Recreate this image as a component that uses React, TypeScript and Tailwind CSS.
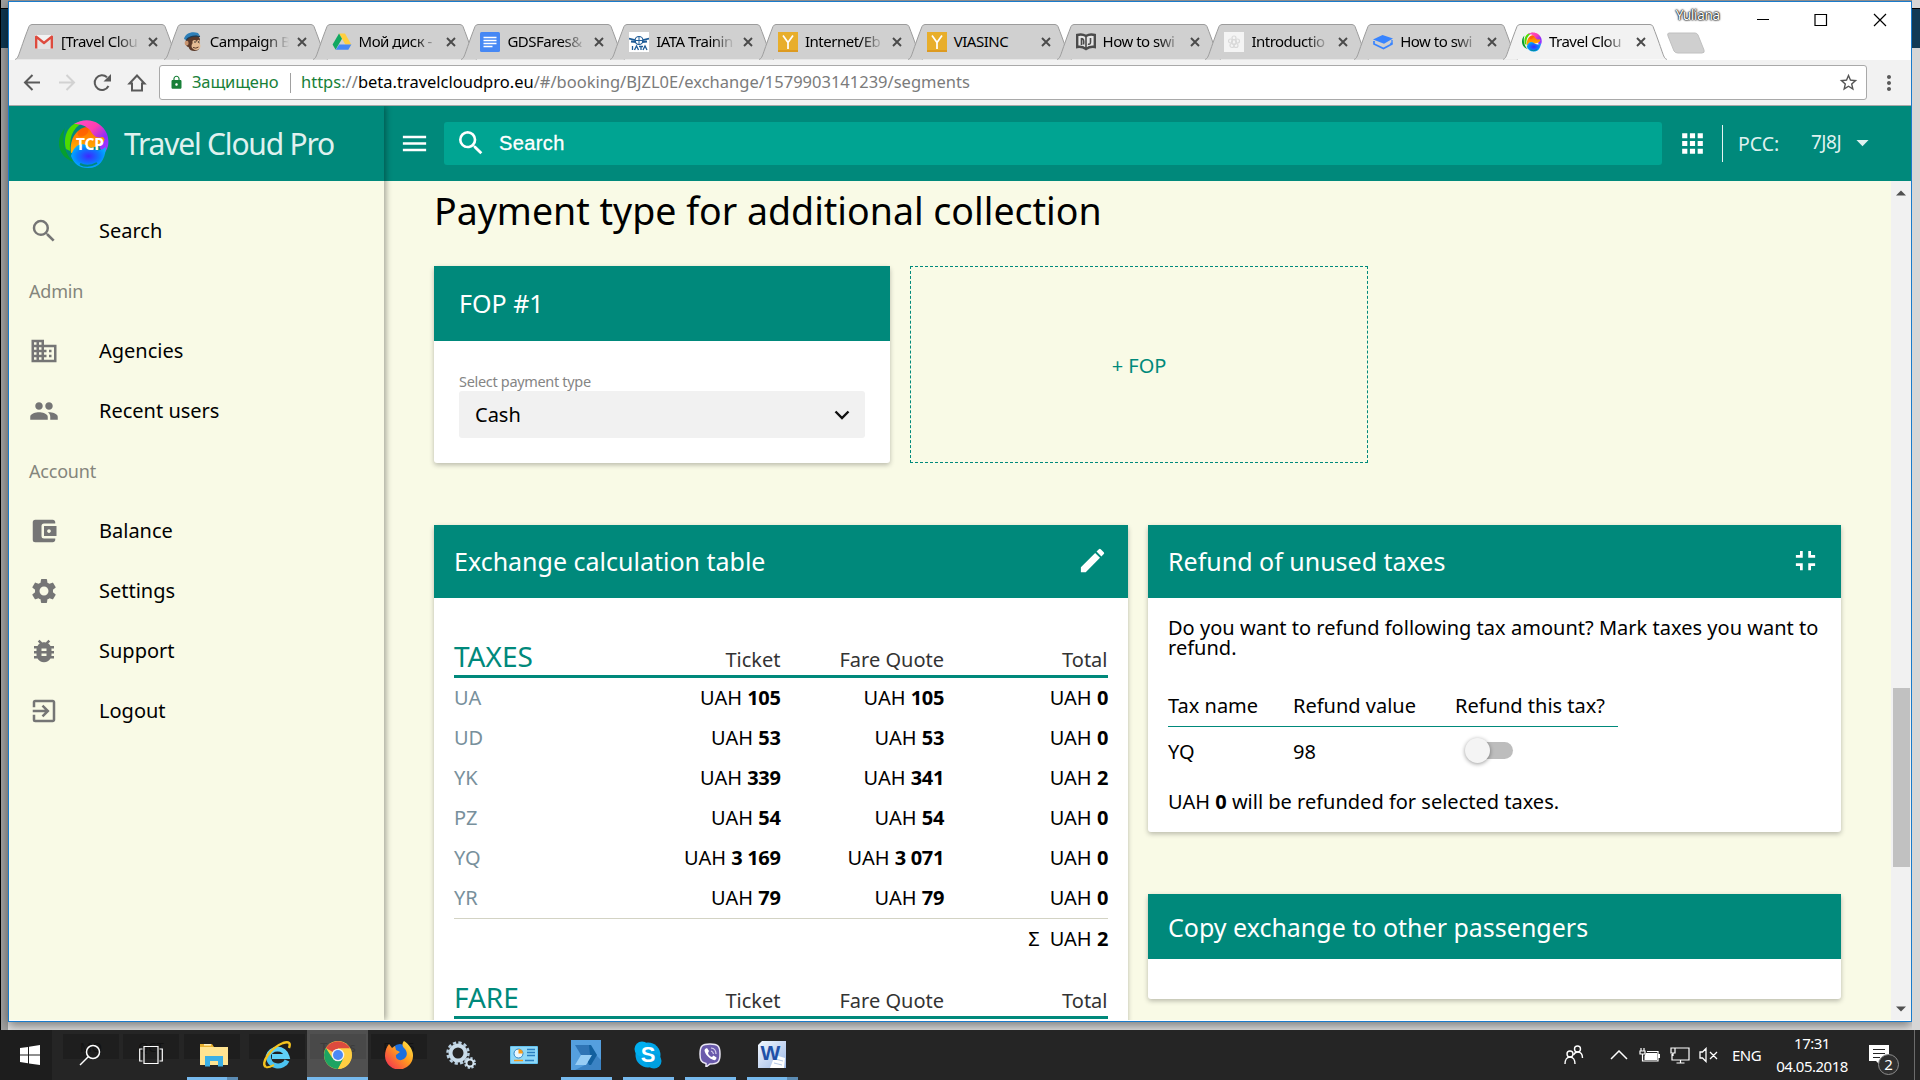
import React from "react";
import {
  MdSearch, MdDomain, MdPeople, MdAccountBalanceWallet, MdSettings, MdBugReport, MdExitToApp,
  MdMenu, MdApps, MdArrowDropDown, MdEdit, MdFullscreenExit, MdLock, MdStarBorder, MdMoreVert,
} from "react-icons/md";

/* ---------- favicons ---------- */
const Gmail = () => (
  <svg viewBox="0 0 20 20" className="size-5 shrink-0">
    <path d="M1 3h18v13.500H1z" fill="#f2f2f2" />
    <path d="M4 16.500V8l6 4.600L16 8v8.500z" fill="#e3e3e3" />
    <path d="M2.200 16.500V4.600L10 11l7.800-6.400V16.500" fill="none" stroke="#dd4b3e" strokeWidth="2.400" strokeLinejoin="round" />
  </svg>
);
const Chimp = () => (
  <svg viewBox="0 0 20 20" className="size-5 shrink-0">
    <path d="M4 7c0-3 3-5 6-5s7 2 7 6l-.5 5c.8 3-1 6-5 6-3 0-5-1-6-4-3 0-4-6-1.500-8z" fill="#5b3a29" />
    <ellipse cx="13" cy="14" rx="4.500" ry="4" fill="#e5bd95" />
    <ellipse cx="11.500" cy="10" rx="2.200" ry="2" fill="#e5bd95" />
    <ellipse cx="15.500" cy="9.800" rx="1.400" ry="2" fill="#e5bd95" />
    <circle cx="12" cy="10" r=".8" fill="#222" /><circle cx="15.600" cy="10" r=".7" fill="#222" />
    <ellipse cx="3.600" cy="11" rx="2" ry="2.500" fill="#c99570" />
    <path d="M10 15.500q3 1.500 5.500-.5" stroke="#5b3a29" fill="none" />
    <path d="M1 7C2 2 8-1 15 1l2 3c-6-.5-11 0-14 4z" fill="#2d7fb8" />
    <path d="M3 8.500C6 4 11 3.500 17 4.500" stroke="#1d3c55" strokeWidth="1.200" fill="none" />
  </svg>
);
const Drive = () => (
  <svg viewBox="0 0 20 20" className="size-5 shrink-0">
    <path d="M7 1.500h6l6.300 11h-6z" fill="#ffcf3f" />
    <path d="M7 1.500L.6 12.500l3 5.300 6.400-11z" fill="#11a861" />
    <path d="M7.200 12.500h12.200l-3.100 5.300H3.800z" fill="#4688f4" />
  </svg>
);
const Doc = () => (
  <svg viewBox="0 0 20 20" className="size-5 shrink-0">
    <rect width="20" height="20" rx="1.500" fill="#4688f4" />
    <path d="M3.500 5.500h13M3.500 8.500h13M3.500 11.500h13M3.500 14.500h9" stroke="#fff" strokeWidth="1.400" />
  </svg>
);
const Iata = () => (
  <svg viewBox="0 0 20 20" className="size-5 shrink-0">
    <rect width="20" height="20" fill="#fff" />
    <circle cx="10" cy="8.500" r="4" fill="none" stroke="#1d5b96" strokeWidth="1.200" />
    <path d="M0 6.500l6 1.500M20 6.500L14 8M2 9.500l5 .5M18 9.500l-5 .5" stroke="#1d5b96" strokeWidth="1.800" />
    <path d="M10 4.500v8M6 8.500h8" stroke="#1d5b96" strokeWidth="1" />
    <path d="M3.500 14v4M5.500 18l2-4 2 4M10 14.500h4M12 14.500V18M14 18l2-4 2 4" stroke="#1d5b96" strokeWidth="1.300" fill="none" />
  </svg>
);
const Yellow = () => (
  <svg viewBox="0 0 20 20" className="size-5 shrink-0">
    <rect width="20" height="20" fill="#e8ae2b" />
    <rect y="18" width="20" height="2" fill="#dd9a20" />
    <path d="M5 3.500l5 7 5-7M10 10.500v6.500" fill="none" stroke="#fff" strokeWidth="1.700" />
  </svg>
);
const Book = () => (
  <svg viewBox="0 0 20 20" className="size-5 shrink-0">
    <path d="M1.200 3q4.800-1.500 8.800 1 4-2.500 8.800-1v12q-4.800-.8-8.800 2-4-2.800-8.800-2z" fill="#e6e6e6" stroke="#4b4b4b" strokeWidth="2.400" />
    <path d="M10 4v13M5.500 6v7M5.500 6.500q3 0 2 6M14.500 6v4q0 3-2.500 2" stroke="#4b4b4b" strokeWidth="1.600" fill="none" />
  </svg>
);
const Pale = () => (
  <svg viewBox="0 0 20 20" className="size-5 shrink-0">
    <rect width="20" height="20" fill="#f4f4f4" />
    <g fill="none" stroke="#d9d9d9" strokeWidth="1.200">
      <circle cx="10" cy="10" r="2.500" /><circle cx="10" cy="6" r="2" /><circle cx="6.500" cy="9" r="2" />
      <circle cx="13.500" cy="9" r="2" /><circle cx="8" cy="13.500" r="2" /><circle cx="12" cy="13.500" r="2" />
    </g>
  </svg>
);
const Layers = () => (
  <svg viewBox="0 0 20 20" className="size-5 shrink-0">
    <path d="M0 7.500L9.500 3 20 6.500 11 11.800z" fill="#3884ff" />
    <path d="M1 9v3l9.500 4.500 7.500-4" fill="none" stroke="#3884ff" strokeWidth="1.700" />
    <path d="M19 8v3" stroke="#3884ff" strokeWidth="1.300" />
    <circle cx="18.500" cy="11.800" r="1.400" fill="#3884ff" />
  </svg>
);
const Swirl = ({ className }: { className: string }) => (
  <svg viewBox="0 0 50 50" className={className}>
    <defs>
      <linearGradient id="orb1" x1="0" y1="0" x2="0" y2="1"><stop offset="0" stopColor="#ff6a00" /><stop offset="1" stopColor="#ffb800" /></linearGradient>
      <linearGradient id="orb2" x1="0" y1="0" x2="1" y2="1"><stop offset="0" stopColor="#ff4ecb" /><stop offset=".4" stopColor="#ff3fae" /><stop offset=".7" stopColor="#8b2bff" /><stop offset="1" stopColor="#b03cff" /></linearGradient>
      <radialGradient id="orb3" cx=".5" cy=".5" r=".55"><stop offset="0" stopColor="#3d28ff" /><stop offset=".6" stopColor="#0a7bff" /><stop offset="1" stopColor="#00b8ff" /></radialGradient>
    </defs>
    <path d="M6 9C-4 20-2 38 15 43 6 36 2 22 6 9z" fill="#069f2f" />
    <path d="M7 30C3 14 12 1 28 2c-12 4-18 13-17 30z" fill="#4ddc00" />
    <path d="M12 34C10 20 18 8 30 8c9 2 17 9 17 17L20 32z" fill="url(#orb1)" />
    <ellipse cx="24" cy="13" rx="6" ry="4" fill="#ff5500" opacity=".6" transform="rotate(-35 24 13)" />
    <path d="M15 5C27-3 43 2 48 15c3 9 1 16-4 20l-4-8c5-3 8-8 3-9-6 2-9-2-12-7C27 7 22 5 15 5z" fill="url(#orb2)" />
    <path d="M12 37c3-11 10-14 17-10 6 5 12 6 18 1-1 14-7 21-18 21-9 0-14-4-17-12z" fill="url(#orb3)" />
    <path d="M21 45q8 4 17-1" fill="none" stroke="#00897b" strokeWidth="2" />
  </svg>
);

const tabs: { title: string; icon: React.ReactNode }[] = [
  { title: "[Travel Clou", icon: <Gmail /> },
  { title: "Campaign B", icon: <Chimp /> },
  { title: "Мой диск -", icon: <Drive /> },
  { title: "GDSFares&", icon: <Doc /> },
  { title: "IATA Trainin", icon: <Iata /> },
  { title: "Internet/Eb", icon: <Yellow /> },
  { title: "VIASINC", icon: <Yellow /> },
  { title: "How to swi", icon: <Book /> },
  { title: "Introductio", icon: <Pale /> },
  { title: "How to swi", icon: <Layers /> },
  { title: "Travel Clou", icon: <Swirl className="size-5 shrink-0" /> },
];

function Tab({ title, icon, active }: { title: string; icon: React.ReactNode; active: boolean }) {
  const fill = active ? "#f2f2f2" : "#d0d0d0";
  return (
    <div className="relative h-9 w-[148.800px] shrink-0">
      <svg viewBox="0 0 164 36" className="absolute left-0 top-0 h-9 w-[164px]">
        <path d="M0 35.500C4 34 3 31 14 2.500Q15 .5 17 .5H147Q149 .5 150 2.500C161 31 160 34 164 35.500" fill={fill} stroke="#9c9c9c" strokeWidth="1" />
      </svg>
      <div className="relative ml-[19px] flex h-[35px] w-[126px] items-center">
        {icon}
        <span className={(title === "VIASINC" ? "" : "[mask-image:linear-gradient(90deg,#000_70%,transparent)] ") + "ml-[7px] w-[79px] whitespace-nowrap text-[15px] tracking-[-0.500px] text-black"}>{title}</span>
        <svg viewBox="0 0 10 10" className="ml-[8px] size-[10px] shrink-0"><path d="M1 1l8 8M9 1L1 9" stroke="#4a4a4a" strokeWidth="1.900" /></svg>
      </div>
    </div>
  );
}

function Browser() {
  return (
    <>
      <div className="flex h-[58px] items-start bg-white">
        <div className="flex pl-[6px] pt-[22px]">
          {tabs.map((t, i) => <Tab key={i} {...t} active={i === 10} />)}
        </div>
        <svg viewBox="0 0 44 22" className="ml-[14px] mt-[30px] h-[22px] w-11"><path d="M3 1h26q2 0 3 2l6 15q1 3-2 3H12q-3 0-4-2L2 4q-1-3 1-3z" fill="#cfcfcf" stroke="#c0c0c0" /></svg>
        <div className="-ml-[37px] mt-[3px] w-[50px] text-center text-[13.500px] leading-[20px] tracking-[-0.300px] text-white [text-shadow:0_0_2px_#000,0_0_1px_#000,0_0_2px_#000]">Yuliana</div>
        <div className="flex pl-[33px] pt-[11px] text-black">
          <svg viewBox="0 0 14 14" className="size-[14px]"><path d="M1 6.500h12" stroke="currentColor" /></svg>
          <svg viewBox="0 0 14 14" className="ml-[44px] size-[14px]"><path d="M1 1.500h11.500v11H1z" fill="none" stroke="currentColor" strokeWidth="1.200" /></svg>
          <svg viewBox="0 0 14 14" className="ml-[45px] size-[14px]"><path d="M1 1l12 12M13 1L1 13" stroke="currentColor" strokeWidth="1.200" /></svg>
        </div>
      </div>
      <div className="flex h-[46px] items-center border-b border-[#a8a8a8] bg-[#f2f2f2]">
        <svg viewBox="0 0 140 24" className="ml-[13px] h-6 w-[140px] shrink-0" fill="none" strokeWidth="2">
          <path d="M18 11.500H3M10.500 4L3 11.500l7.500 7.500" stroke="#5a5a5a" />
          <path d="M37 11.500h15M44.500 4l7.500 7.500-7.500 7.500" stroke="#d2d2d2" />
          <path d="M86.500 15A7.300 7.300 0 1 1 85 6.300" stroke="#5a5a5a" />
          <path d="M89 3v7.500h-7.500z" fill="#5a5a5a" />
          <path d="M107.500 12.500L115 4.500l7.500 8H120v7h-10v-7z" stroke="#5a5a5a" />
        </svg>
        <div className="ml-[-3px] flex h-[35px] w-[1708px] items-center rounded-[3px] border border-[#a9a9a9] bg-white">
          <MdLock className="ml-[9px] size-[15px] text-[#188038]" />
          <span className="ml-[8px] w-[98px] whitespace-nowrap text-[16.500px] tracking-[-0.150px] text-[#188038]">Защищено</span>
          <span className="h-5 w-px bg-[#a0a0a0]" />
          <span className="ml-[10px] whitespace-nowrap text-[16.500px] text-[#7b7b7b]"><span className="text-[#188038]">https</span>://<span className="text-black">beta.travelcloudpro.eu</span>/#/booking/BJZL0E/exchange/1579903141239/segments</span>
          <MdStarBorder className="ml-auto mr-[7px] size-[21px] text-[#555]" />
        </div>
        <MdMoreVert className="ml-[10px] size-[24px] text-[#5a5a5a]" />
      </div>
    </>
  );
}

const menu: { label: string; icon?: React.ElementType }[] = [
  { label: "Search", icon: MdSearch },
  { label: "Admin" },
  { label: "Agencies", icon: MdDomain },
  { label: "Recent users", icon: MdPeople },
  { label: "Account" },
  { label: "Balance", icon: MdAccountBalanceWallet },
  { label: "Settings", icon: MdSettings },
  { label: "Support", icon: MdBugReport },
  { label: "Logout", icon: MdExitToApp },
];

function Sidebar() {
  return (
    <aside className="relative z-10 w-[375px] shrink-0 bg-[#f9fae6] shadow-[2px_0_6px_rgba(0,0,0,0.350)]">
      <div className="flex h-[75px] items-center bg-[#00897b]">
        <div className="relative ml-[50px] size-[50px]">
          <Swirl className="size-[50px]" />
          <span className="absolute left-[17px] top-[14px] text-[15.500px] font-bold leading-[22px] tracking-[-0.200px] text-white">TCP</span>
        </div>
        <span className="ml-[15px] whitespace-nowrap text-[30px] tracking-[-1.200px] text-[#dff1ef]">Travel Cloud Pro</span>
      </div>
      <nav className="pt-[20px]">
        {menu.map(({ label, icon: Icon }) =>
          Icon ? (
            <div key={label} className="flex h-[60px] items-center pl-[20px]">
              <Icon className="size-[30px] text-[#757575]" />
              <span className="ml-[40px] text-[20px] text-black">{label}</span>
            </div>
          ) : (
            <div key={label} className="flex h-[60px] items-center pl-[20px] pt-px text-[18px] tracking-[-0.200px] text-[#84857c]">{label}</div>
          )
        )}
      </nav>
    </aside>
  );
}

const rows = [
  ["UA", "105", "105", "0"],
  ["UD", "53", "53", "0"],
  ["YK", "339", "341", "2"],
  ["PZ", "54", "54", "0"],
  ["YQ", "3 169", "3 071", "0"],
  ["YR", "79", "79", "0"],
];

const Money = ({ v }: { v: string }) => <span className="text-right">UAH <b className="tracking-[-0.350px]">{v}</b></span>;

const SectionHead = ({ title }: { title: string }) => (
  <div className="grid h-[43px] grid-cols-[163px_163.500px_163.500px_163.500px] items-baseline border-b-[3px] border-[#00897b] pt-px text-[20px] leading-[40px] text-[#333]">
    <span className="text-[28px] text-[#00897b]">{title}</span>
    <span className="text-right">Ticket</span>
    <span className="text-right">Fare Quote</span>
    <span className="text-right">Total</span>
  </div>
);

const card = "rounded-[3px] bg-white shadow-[0_2px_5px_rgba(0,0,0,0.260)]";

function Content() {
  return (
    <div className="h-[839px] w-[1507px] shrink-0 overflow-hidden bg-[#f9fae6] pl-[50px]">
      <h1 className="h-[85px] whitespace-nowrap pt-[5px] text-[37.500px] leading-[50px] text-black">Payment type for additional collection</h1>
      <div className="flex gap-5">
        <section className={card + " h-[197px] w-[456px]"}>
          <div className="flex h-[75px] items-center bg-[#00897b] pl-[25px] text-[25px] text-white">FOP #1</div>
          <div className="px-[25px] pt-[31px]">
            <div className="h-[19px] text-[14.500px] leading-[19px] tracking-[-0.320px] text-[#858585]">Select payment type</div>
            <div className="flex h-[47px] items-center justify-between rounded-[3px] bg-[#f1f1f1] pl-[16px] pr-[15px] text-[20px] text-black">
              Cash
              <svg viewBox="0 0 16 10" className="h-[10px] w-4"><path d="M1.500 1.500L8 8l6.500-6.500" fill="none" stroke="#111" strokeWidth="2.400" /></svg>
            </div>
          </div>
        </section>
        <section className="flex h-[197px] w-[458px] items-center justify-center border border-dashed border-[#00897b] pt-[2px] text-[20px] text-[#00897b]">+ FOP</section>
      </div>
      <div className="mt-[62px] flex items-start gap-5">
        <section className={card + " h-[560px] w-[694px]"}>
          <header className="flex h-[73px] items-center justify-between bg-[#00897b] pl-[20px] pr-[20px] text-[25px] text-white">Exchange calculation table<MdEdit className="mb-[3px] size-[31px]" /></header>
          <div className="px-5 pt-[37px]">
            <SectionHead title="TAXES" />
            <div className="border-b border-[#d3d3c4] text-[20px] text-black">
              {rows.map(([n, a, b, c]) => (
                <div key={n} className="grid h-10 grid-cols-[163px_163.500px_163.500px_164px] items-center">
                  <span className="text-[#78909c]">{n}</span><Money v={a} /><Money v={b} /><Money v={c} />
                </div>
              ))}
            </div>
            <div className="flex h-[40px] items-center justify-end gap-[10px] text-[20px] text-black"><span>Σ</span><Money v="2" /></div>
            <div className="pt-[17px]"><SectionHead title="FARE" /></div>
          </div>
        </section>
        <div className="w-[693px]">
          <section className={card + " h-[307px]"}>
            <header className="flex h-[73px] items-center justify-between bg-[#00897b] pl-[20px] pr-[19px] text-[25px] text-white">Refund of unused taxes<MdFullscreenExit className="mb-[3px] size-[33px]" /></header>
            <div className="px-5 pt-5 text-[20px] leading-5 text-black">
              <p className="w-[660px] tracking-[0.020px]">Do you want to refund following tax amount? Mark taxes you want to refund.</p>
              <div className="mt-[30px] grid h-[39px] w-[450px] grid-cols-[125px_162px_163px] items-center border-b border-[#00897b] pb-[2px]">
                <span>Tax name</span><span>Refund value</span><span className="whitespace-nowrap">Refund this tax?</span>
              </div>
              <div className="grid h-[50px] w-[450px] grid-cols-[125px_172px_153px] items-center">
                <span>YQ</span><span>98</span>
                <span className="mb-1 flex h-[25px] w-[48px] items-center">
                  <span className="z-10 size-[25px] rounded-full bg-[#f4f4f4] shadow-[0_1px_4px_rgba(0,0,0,0.400)]" />
                  <span className="-ml-3 h-[17px] w-[35px] rounded-full bg-[#bdbdbd]" />
                </span>
              </div>
              <p className="mt-[15px]">UAH <b>0</b> will be refunded for selected taxes.</p>
            </div>
          </section>
          <section className={card + " mt-[62px] h-[105px]"}>
            <header className="flex h-[65px] items-center bg-[#00897b] pl-5 pt-[2px] text-[25px] text-white">Copy exchange to other passengers</header>
          </section>
        </div>
      </div>
    </div>
  );
}

function Page() {
  return (
    <div className="flex h-[914px] overflow-hidden">
      <Sidebar />
      <main className="flex min-w-0 flex-1 flex-col">
        <header className="flex h-[75px] shrink-0 items-center bg-[#00897b] text-white">
          <MdMenu className="ml-[15px] size-[31px]" />
          <div className="ml-[14px] flex h-[43px] w-[1218px] items-center rounded-[3px] bg-[#00a492]">
            <MdSearch className="mb-[2px] ml-[11px] size-[32px]" />
            <span className="mb-[2px] ml-[12px] font-['Liberation_Sans'] text-[20px] tracking-[0.400px] [-webkit-text-stroke:0.300px_white]">Search</span>
          </div>
          <MdApps className="ml-[15px] size-[31px]" />
          <span className="ml-[14px] h-[37px] w-px bg-[#e6f4f2]" />
          <span className="ml-[15px] w-[73px] text-[19.500px] text-[#dff1ef]">PCC:</span>
          <span className="mb-[3px] w-[37px] whitespace-nowrap text-[19px] tracking-[-0.500px] text-[#dff1ef]">7J8J</span>
          <MdArrowDropDown className="mb-[2px] size-[29px] text-[#dff1ef]" />
        </header>
        <div className="flex flex-1">
          <Content />
          <div className="flex w-5 shrink-0 flex-col items-center bg-[#f1f1f1]">
            <svg viewBox="0 0 10 6" className="mt-[9px] h-[6px] w-[10px]"><path d="M0 5.500L5 .5l5 5z" fill="#505050" /></svg>
            <span className="mt-[492px] h-[179px] w-[17px] bg-[#c1c1c1]" />
            <svg viewBox="0 0 10 6" className="mt-[139px] h-[6px] w-[10px]"><path d="M0 .5h10l-5 5z" fill="#505050" /></svg>
          </div>
        </div>
      </main>
    </div>
  );
}

/* ---------- taskbar icons ---------- */
const WinLogo = () => <svg viewBox="0 0 20 20" className="size-5" fill="#fff"><path d="M0 3l8-1.100v7.700H0zM9 1.700L20 0v9.600H9zM0 10.600h8v7.600L0 17zM9 10.600h11V20L9 18.400z" /></svg>;
const Find = () => <svg viewBox="0 0 22 22" className="size-[22px]" fill="none" stroke="#fff" strokeWidth="1.500"><circle cx="14" cy="8" r="6.500" /><path d="M9.500 12.500L1 21" /></svg>;
const TaskView = () => <svg viewBox="0 0 24 20" className="h-5 w-6" fill="none" stroke="#fff" strokeWidth="1.200"><path d="M5 1.500h14v17H5zM3.500 4H.7v12h2.800M20.500 4h2.800v12h-2.800" /></svg>;
const Explorer = () => (
  <svg viewBox="0 0 28 24" className="h-6 w-7">
    <path d="M0 1h12l2 3v18H0z" fill="#e7b02f" /><path d="M4 1.800h7" stroke="#fff6d0" strokeWidth="1.400" />
    <path d="M0 4h28v18H0z" fill="#ffe491" />
    <path d="M5 23.500V13h18v10.500h-5V18h-8v5.500z" fill="#3bb0e6" />
  </svg>
);
const IE = () => (
  <svg viewBox="0 0 30 30" className="size-[30px]">
    <path d="M6 16.500A9.800 9.800 0 0 1 25 16.500H10" fill="none" stroke="#5fd0f6" strokeWidth="5" />
    <path d="M6.500 15c-1 13 15 14 18.500 5.500" fill="none" stroke="#4cc3f1" strokeWidth="5" />
    <path d="M4 27C-2 24 8 8 21 3c6-2 8 0 6 5" fill="none" stroke="#f4c31f" strokeWidth="2.400" />
    <path d="M4 27c3 1 6-1 8-2" fill="none" stroke="#f4c31f" strokeWidth="2" />
  </svg>
);
const ChromeIcon = () => (
  <svg viewBox="0 0 28 28" className="size-7">
    <circle cx="14" cy="14" r="14" fill="#ffce42" />
    <path d="M14 14L1.900 7A14 14 0 0 1 26.100 7.500L14 7.500z" fill="#dc4b3e" />
    <path d="M1.900 7A14 14 0 0 0 14 28l5.800-10.500L14 20 8.300 17z" fill="#1da462" />
    <path d="M26.100 7.500H14l5.600 9.800L14 28A14 14 0 0 0 26.100 7.500z" fill="#ffce42" />
    <circle cx="14" cy="14" r="6.300" fill="#f2f2f2" /><circle cx="14" cy="14" r="5" fill="#4b89f5" />
  </svg>
);
const Firefox = () => (
  <svg viewBox="0 0 28 28" className="size-7">
    <defs><linearGradient id="fox" x1="1" y1="0" x2="0" y2="1"><stop offset="0" stopColor="#fff04a" /><stop offset=".45" stopColor="#ff9a1f" /><stop offset="1" stopColor="#f0205a" /></linearGradient></defs>
    <circle cx="15" cy="12" r="9" fill="#1a6fe0" />
    <path d="M2 6l2-3 3 4 3-2 1 4 4 2-4 3c-1 5 5 7 9 3 3-3 2-7-1-10-2-2-2-5 0-7 5 3 9 9 9 14a14 14 0 0 1-28 1C0 11 1 8 2 6z" fill="url(#fox)" />
  </svg>
);
const Gears = () => (
  <svg viewBox="0 0 30 28" className="h-7 w-[30px]" fill="none">
    <circle cx="12" cy="12" r="10.500" stroke="#b9cfe0" strokeWidth="2.500" strokeDasharray="3.300 2.200" />
    <circle cx="12" cy="12" r="7.500" stroke="#c9dcea" strokeWidth="4" />
    <circle cx="24" cy="22" r="5" stroke="#b9cfe0" strokeWidth="2" strokeDasharray="2.200 1.700" />
    <circle cx="24" cy="22" r="3.500" stroke="#d5e5f0" strokeWidth="2" />
  </svg>
);
const Panel = () => (
  <svg viewBox="0 0 28 18" className="h-[18px] w-7">
    <rect width="28" height="18" rx="1" fill="#63c3f0" /><rect x="1" y="1" width="26" height="16" fill="#8fd8f8" />
    <circle cx="8.500" cy="7.500" r="4.500" fill="#e8f7ff" stroke="#2f87c8" /><path d="M8.500 7.500V3a4.500 4.500 0 0 1 4.500 4.500z" fill="#f59b1c" />
    <path d="M17 3.500h8M17 6.500h8M17 9.500h8" stroke="#2b7fc0" strokeWidth="1.500" /><path d="M4 14.500h9" stroke="#f59b1c" strokeWidth="1.500" /><path d="M15 14.500h9" stroke="#2b7fc0" strokeWidth="1.500" />
  </svg>
);
const BlueArrow = () => (
  <svg viewBox="0 0 30 30" className="size-[30px]">
    <rect width="30" height="30" fill="#559fde" /><path d="M25 15l5 5v10H4l10-5z" fill="#3b83c4" />
    <path d="M4 5h14l6 10H10z" fill="#2f74b5" /><path d="M18 5h2l6 10-6 10h-2l-2-5 3-5z" fill="#12609f" /><path d="M10 15h11l-6 10H4z" fill="#97cdf5" />
  </svg>
);
const Skype = () => (
  <div className="relative flex size-7 items-center justify-center">
    <svg viewBox="0 0 28 28" className="absolute size-7"><circle cx="14" cy="14" r="12.500" fill="#00a5e8" /><circle cx="8" cy="8" r="7.500" fill="#00aff0" /><circle cx="20" cy="20" r="7.500" fill="#009fe0" /></svg>
    <span className="relative font-['Liberation_Sans'] text-[22px] font-bold leading-none text-white">S</span>
  </div>
);
const Viber = () => (
  <svg viewBox="0 0 24 24" className="size-6">
    <path d="M12 1c8 0 10 2 10 10s-2 10-10 10l-4 3v-3.500C3 19.500 2 17 2 11 2 3 4 1 12 1z" fill="#6a5aac" stroke="#eae7f4" strokeWidth="1.500" />
    <path d="M7 6l2-1 2 3-1 2c.5 2 2 3.500 4 4l1.500-1.500 3 2c0 2-1.500 3-3 2.500C11 15.500 7 11 6.500 7.500z" fill="#fff" />
    <path d="M13 5q5 .5 5 6M13 8q2 .5 2.500 3" fill="none" stroke="#d9d3ee" strokeWidth="1.200" />
  </svg>
);
const Word = () => (
  <div className="relative size-7">
    <svg viewBox="0 0 28 28" className="absolute size-7"><defs><linearGradient id="wd" x1="0" y1="0" x2="1" y2="1"><stop offset="0" stopColor="#f3f8ff" /><stop offset="1" stopColor="#9db9e6" /></linearGradient></defs><path d="M4 0h24v27H0V4z" fill="url(#wd)" /><path d="M17 14l10 3-1 10H12z" fill="#fff" /><path d="M17 18l8 2M16 22l8 2" stroke="#b6c9e6" /></svg>
    <span className="absolute left-[3px] top-0 font-['Liberation_Sans'] text-[21px] font-bold leading-[24px] text-[#1f50a8]">W</span>
  </div>
);

const apps: { icon: React.ReactNode; w: string; ghost?: string; line?: "one" | "two"; active?: boolean }[] = [
  { icon: <Find />, w: "w-[60px]", ghost: "MQ" },
  { icon: <TaskView />, w: "w-[61px]", ghost: "QCT" },
  { icon: <Explorer />, w: "w-[65px]", ghost: " ", line: "two" },
  { icon: <IE />, w: "w-[61px]", ghost: " " },
  { icon: <ChromeIcon />, w: "w-[61px]", ghost: "T     rs", line: "one", active: true },
  { icon: <Firefox />, w: "w-[62px]", ghost: "E     5" },
  { icon: <Gears />, w: "w-[62px]" },
  { icon: <Panel />, w: "w-[63px]" },
  { icon: <BlueArrow />, w: "w-[62px]", line: "one" },
  { icon: <Skype />, w: "w-[62px]", line: "one" },
  { icon: <Viber />, w: "w-[62px]", line: "one" },
  { icon: <Word />, w: "w-[61px]", line: "two" },
];

function Taskbar() {
  return (
    <footer className="relative flex h-[50px] bg-[#252525] font-['Noto_Sans'] text-white">
      <div className="flex w-[60px] items-center justify-center border-r-[8px] border-transparent bg-[#1d1d1d] [background-clip:padding-box] pl-[8px]"><WinLogo /></div>
      {apps.map((a, i) => (
        <div key={i} className={a.w + " relative flex shrink-0 items-center justify-center " + (a.active ? "bg-[#505050]" : "")}>
          {a.ghost && <span className={(a.active ? "bg-[#494949] text-[#3c3c3c]" : "bg-[#1e1e1e] text-[#121212]") + " absolute left-[3px] top-[4px] h-[25px] w-[56px] whitespace-pre text-center text-[13px] leading-[27px]"}>{a.ghost}</span>}
          <span className="relative">{a.icon}</span>
          {a.line && <span className={(a.active ? "inset-x-0" : "left-[6px] w-[51px]") + " absolute bottom-0 h-[3px] bg-[#76b9ed]"} />}
          {a.line === "two" && <span className="absolute bottom-0 left-[46px] h-[3px] w-[11px] bg-[#5b8bb2]" />}
        </div>
      ))}
      <div className="ml-auto flex items-center">
        <svg viewBox="0 0 20 20" className="size-5" fill="none" stroke="#fff" strokeWidth="1.400"><circle cx="6" cy="9" r="3" /><path d="M1 19c0-4 2-7 5-7s5 3 5 7" /><circle cx="13.500" cy="4" r="3" /><path d="M9.500 10c1-2 2-3 4-3 3 0 5 2 5 6" /></svg>
        <svg viewBox="0 0 18 10" className="ml-[26px] h-[10px] w-[18px]" fill="none" stroke="#fff" strokeWidth="1.500"><path d="M1 9l8-8 8 8" /></svg>
        <svg viewBox="0 0 22 16" className="ml-[11px] h-4 w-[22px]" fill="none" stroke="#fff" strokeWidth="1.200"><path d="M2 1v3M5 1v3M1 4h5v3H1zM3.500 7v7H19V4.500H8" /><path d="M7 6h11v7H5.500V9z" fill="#fff" stroke="none" /><path d="M20 7v4" strokeWidth="2" /></svg>
        <svg viewBox="0 0 20 18" className="ml-[9px] h-[18px] w-5" fill="none" stroke="#fff" strokeWidth="1.200"><path d="M5 2h14v12H2V8M10.500 14v3M6.500 17h8M1 2h4v5H1zM3 7v3" /></svg>
        <svg viewBox="0 0 20 16" className="ml-[9px] h-4 w-5" fill="none" stroke="#fff" strokeWidth="1.300"><path d="M1 5h2.500L7 1.500v13L3.500 11H1zM11 5l7 7M18 5l-7 7" /></svg>
        <span className="ml-[13px] w-[31px] whitespace-nowrap text-[15px] tracking-[-0.500px]">ENG</span>
        <div className="ml-[12px] w-[74px] whitespace-nowrap text-center text-[15px] leading-[23px] tracking-[-0.500px]"><div>17:31</div><div>04.05.2018</div></div>
        <div className="relative ml-[20px] h-5 w-[51px]">
          <svg viewBox="0 0 20 20" className="size-5"><path d="M0 0h20v16H11v4l-4-4H0z" fill="#fff" /><path d="M4 4.500h12M4 8.500h12M4 12.500h7" stroke="#252525" /></svg>
          <span className="absolute left-[9px] top-[9px] flex size-[21px] items-center justify-center rounded-full border border-[#8d8d8d] bg-[#303030] text-[15px] leading-none">2</span>
        </div>
      </div>
      <span className="absolute bottom-0 right-[5px] h-[50px] w-px bg-[#6b6b6b]" />
    </footer>
  );
}

export default function App() {
  return (
    <div className="relative h-[1080px] w-[1920px] overflow-hidden bg-[#e2e2e2] font-['Noto_Sans',sans-serif]">
      <div className="flex h-[1030px]">
        <div className="w-[8px] shrink-0 border-l border-black bg-[#a0a0a0]"><div className="mt-[8px] h-[40px] border-t border-black bg-[#0e3752]" /></div>
        <div className="h-[1022px] w-[1904px] shrink-0 border-t border-[#8c8c8c] shadow-[0_4px_10px_rgba(0,0,0,0.450)]">
          <div className="h-[1021px] border border-[#1a7bcb] bg-white">
            <Browser />
            <Page />
          </div>
        </div>
        <div className="w-[8px] bg-[#d6d6d6]"><div className="mt-[8px] h-[40px] border-t border-black bg-[#123a55]" /></div>
      </div>
      <Taskbar />
    </div>
  );
}
